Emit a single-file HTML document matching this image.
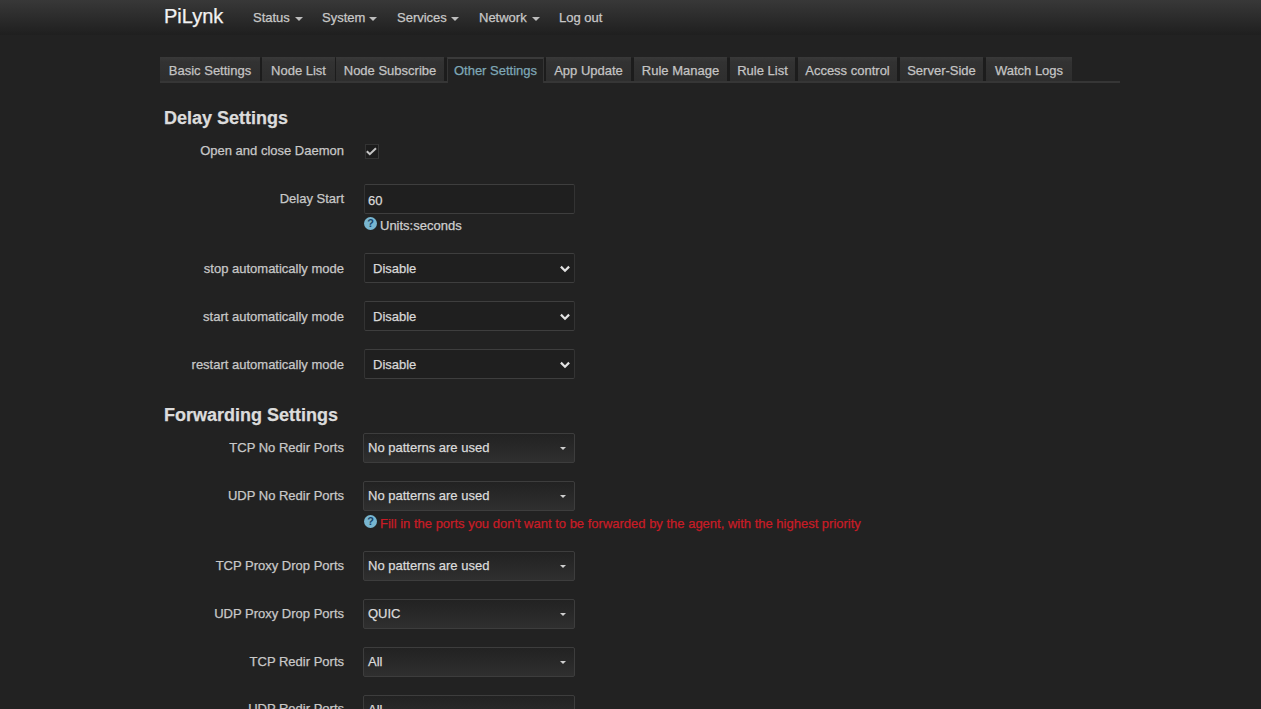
<!DOCTYPE html>
<html><head><meta charset="utf-8">
<style>
html,body{margin:0;padding:0;}
body{width:1261px;height:709px;overflow:hidden;background:#222222;-webkit-text-stroke:0.25px currentColor;font-family:"Liberation Sans",sans-serif;font-size:13px;color:#cccccc;position:relative;}
.hdr{position:absolute;left:0;top:0;width:1261px;height:35px;background:linear-gradient(#383838,#1f1f1f);}
.t{position:absolute;white-space:nowrap;line-height:1;}
.brand{font-size:20px;color:#f2f2f2;left:164px;top:6px;}
.nav{font-size:13px;color:#c8c8c8;top:11px;}
.caret{position:absolute;width:0;height:0;border-left:4px solid transparent;border-right:4px solid transparent;border-top:4px solid #bdbdbd;top:17px;}
.tabline{position:absolute;left:160px;top:81px;width:960px;height:2px;background:#363636;}
.tab{position:absolute;top:57px;height:24px;background:linear-gradient(#393939,#323232 5px,#2e2e2e);box-sizing:border-box;}
.tab span{position:absolute;top:7px;left:0;right:0;text-align:center;color:#c4c4c4;font-size:13px;line-height:1;white-space:nowrap;}
.tab.active{background:#222;border:1px solid #353535;border-top:2px solid #3a3a3a;border-bottom:none;height:26px;}
.tab.active span{color:#7ea7b6;top:5px;}
h3{position:absolute;margin:0;font-size:18px;font-weight:bold;color:#dcdcdc;left:164px;line-height:1;white-space:nowrap;}
.lbl{position:absolute;right:917px;text-align:right;color:#c8c8c8;font-size:13px;line-height:1;white-space:nowrap;}
.inp{position:absolute;left:364px;width:211px;height:30px;box-sizing:border-box;border:1px solid #333;border-top-color:#3e3e3e;border-bottom-color:#3e3e3e;background:#1f1f1f;border-radius:2px;}
.inp span{position:absolute;left:3px;top:9px;color:#d8d8d8;font-size:13px;line-height:1;}
.sel span{left:8px;top:8px;}
.chev{position:absolute;right:3px;top:11px;}
.dd{position:absolute;left:363px;width:212px;height:30px;box-sizing:border-box;border:1px solid #3a3a3a;background:linear-gradient(#222222,#2f2f2f);border-color:#3d3d3d;border-radius:2px;}
.dd span{position:absolute;left:4px;top:7px;color:#dadada;font-size:13px;line-height:1;}
.dd i{position:absolute;right:8px;top:13px;width:0;height:0;border-left:3px solid transparent;border-right:3px solid transparent;border-top:3px solid #cfcfcf;}
.help{position:absolute;left:364px;width:13px;height:13px;border-radius:50%;background:#78b6d0;color:#184468;font-size:11px;font-weight:bold;text-align:center;line-height:13px;-webkit-text-stroke:0;}
.cb{position:absolute;left:365px;top:144px;width:14px;height:15px;border:1px solid #333;border-right-color:#3a3a3a;box-sizing:border-box;background:#1c1c1c;}
</style></head>
<body>
<div class="hdr"></div>
<div class="t brand">PiLynk</div>
<div class="t nav" style="left:253px">Status</div><div class="caret" style="left:295px"></div>
<div class="t nav" style="left:322px">System</div><div class="caret" style="left:369px"></div>
<div class="t nav" style="left:397px">Services</div><div class="caret" style="left:451px"></div>
<div class="t nav" style="left:479px">Network</div><div class="caret" style="left:532px"></div>
<div class="t nav" style="left:559px">Log out</div>

<div style="position:absolute;left:160px;top:58px;width:912px;height:23px;background:#1c1c1c"></div>
<div class="tabline"></div>
<div class="tab" style="left:160px;width:100px"><span>Basic Settings</span></div>
<div class="tab" style="left:262px;width:73px"><span>Node List</span></div>
<div class="tab" style="left:336px;width:108px"><span>Node Subscribe</span></div>
<div class="tab active" style="left:447px;width:97px"><span>Other Settings</span></div>
<div class="tab" style="left:546px;width:85px"><span>App Update</span></div>
<div class="tab" style="left:634px;width:93px"><span>Rule Manage</span></div>
<div class="tab" style="left:730px;width:65px"><span>Rule List</span></div>
<div class="tab" style="left:798px;width:99px"><span>Access control</span></div>
<div class="tab" style="left:900px;width:83px"><span>Server-Side</span></div>
<div class="tab" style="left:986px;width:86px"><span>Watch Logs</span></div>

<h3 style="top:109px">Delay Settings</h3>

<div class="lbl" style="top:144px">Open and close Daemon</div>
<div class="cb"></div><svg width="20" height="20" viewBox="0 0 20 20" style="position:absolute;left:360px;top:140px"><path d="M6.8 11.2 L9.8 14.2 L16 8.2" fill="none" stroke="#c4c4c4" stroke-width="2"/></svg>

<div class="lbl" style="top:192px">Delay Start</div>
<div class="inp" style="top:184px"><span>60</span></div>
<div class="help" style="top:217px">?</div>
<div class="t" style="left:380px;top:219px;color:#cfcfcf">Units:seconds</div>

<div class="lbl" style="top:262px">stop automatically mode</div>
<div class="inp sel" style="top:253px"><span>Disable</span><svg class="chev" width="12" height="8" viewBox="0 0 12 8"><path d="M1.9 1.6 L6 5.7 L10.1 1.6" fill="none" stroke="#e2e2e2" stroke-width="2.2"/></svg></div>
<div class="lbl" style="top:310px">start automatically mode</div>
<div class="inp sel" style="top:301px"><span>Disable</span><svg class="chev" width="12" height="8" viewBox="0 0 12 8"><path d="M1.9 1.6 L6 5.7 L10.1 1.6" fill="none" stroke="#e2e2e2" stroke-width="2.2"/></svg></div>
<div class="lbl" style="top:358px">restart automatically mode</div>
<div class="inp sel" style="top:349px"><span>Disable</span><svg class="chev" width="12" height="8" viewBox="0 0 12 8"><path d="M1.9 1.6 L6 5.7 L10.1 1.6" fill="none" stroke="#e2e2e2" stroke-width="2.2"/></svg></div>

<h3 style="top:406px">Forwarding Settings</h3>

<div class="lbl" style="top:441px">TCP No Redir Ports</div>
<div class="dd" style="top:433px"><span>No patterns are used</span><i></i></div>
<div class="lbl" style="top:489px">UDP No Redir Ports</div>
<div class="dd" style="top:481px"><span>No patterns are used</span><i></i></div>
<div class="help" style="top:515px">?</div>
<div class="t" style="left:380px;top:517px;color:#c81c26">Fill in the ports you don't want to be forwarded by the agent, with the highest priority</div>

<div class="lbl" style="top:559px">TCP Proxy Drop Ports</div>
<div class="dd" style="top:551px"><span>No patterns are used</span><i></i></div>
<div class="lbl" style="top:607px">UDP Proxy Drop Ports</div>
<div class="dd" style="top:599px"><span>QUIC</span><i></i></div>
<div class="lbl" style="top:655px">TCP Redir Ports</div>
<div class="dd" style="top:647px"><span>All</span><i></i></div>
<div class="lbl" style="top:702px">UDP Redir Ports</div>
<div class="dd" style="top:695px"><span>All</span><i></i></div>
</body></html>
